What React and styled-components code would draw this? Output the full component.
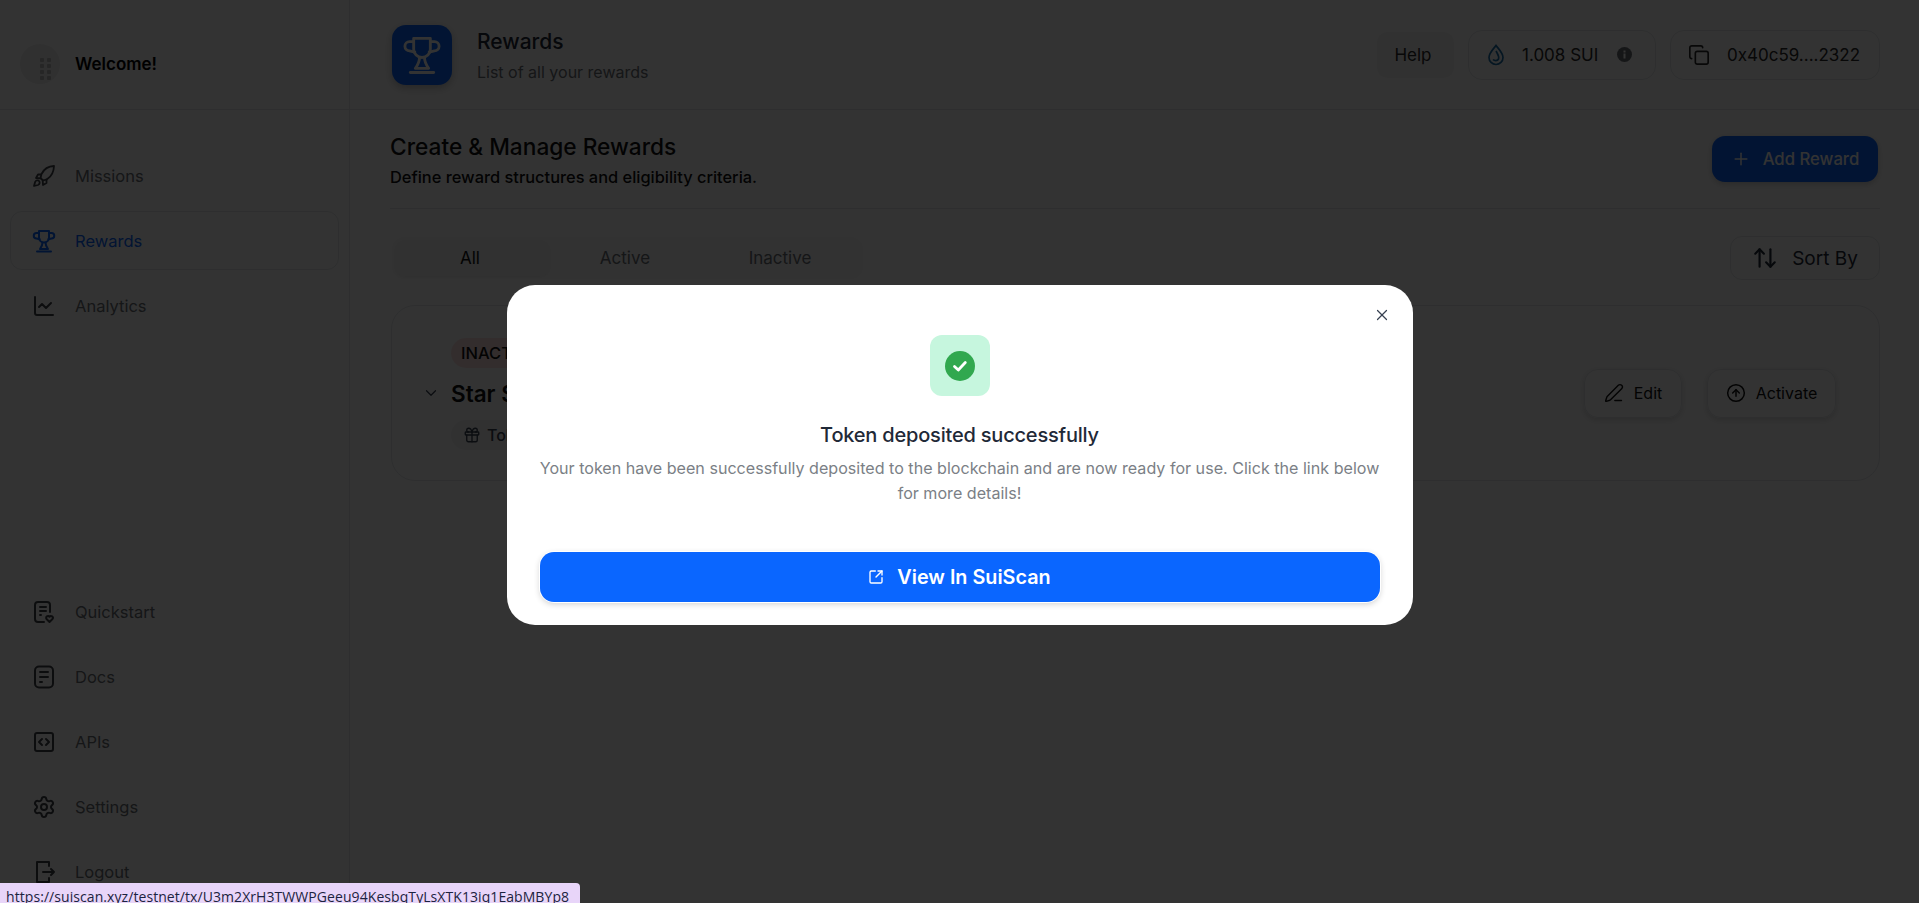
import styled, { createGlobalStyle } from 'styled-components';
import {
  ArrowUpDown,
  ChartLine,
  ChevronDown,
  CircleArrowUp,
  Copy,
  Gift,
  PenLine,
  Plus,
  Settings,
  SquareArrowOutUpRight,
  SquareCode,
  X,
} from 'lucide-react';

const GlobalStyle = createGlobalStyle`
  * { box-sizing: border-box; }
  html, body { margin: 0; padding: 0; height: 100%; background: #fff; }
  body { font-family: Inter, "Open Sans", sans-serif; color: #111827; overflow: hidden; }
`;

const Shell = styled.div`
  display: grid;
  grid-template-columns: 350px 1fr;
  height: 100vh;
  overflow: hidden;
`;

const Sidebar = styled.aside`
  display: flex;
  flex-direction: column;
  border-right: 1px solid #e5e7eb;
  height: 100%;
`;

const Brand = styled.div`
  display: flex;
  align-items: center;
  gap: 15px;
  height: 110px;
  padding: 18px 0 0 20px;
  border-bottom: 1px solid #e5e7eb;
  font-size: 17px;
  font-weight: 600;
  color: #000;
`;

const NavGroup = styled.nav`
  display: flex;
  flex-direction: column;
  padding: 0 10px;
  margin-top: ${(p) => p.$top}px;
`;

const NavItem = styled.a`
  display: flex;
  align-items: center;
  gap: 19px;
  height: ${(p) => (p.$active ? 59 : 65)}px;
  margin: ${(p) => (p.$active ? '3px 0' : '0')};
  padding-left: 21px;
  font-size: 16.5px;
  font-weight: 400;
  color: ${(p) => (p.$active ? '#0a66ff' : '#6b6f76')};
  border: 1px solid ${(p) => (p.$active ? '#e5e7eb' : 'transparent')};
  border-radius: 12px;
  svg { color: ${(p) => (p.$active ? '#0a66ff' : '#3f4248')}; flex-shrink: 0; }
`;

const Main = styled.main`
  display: flex;
  flex-direction: column;
  min-width: 0;
`;

const TopBar = styled.header`
  display: flex;
  align-items: center;
  height: 110px;
  padding: 0 39px 0 42px;
  border-bottom: 1px solid #e5e7eb;
`;

const PageBadge = styled.div`
  display: flex;
  align-items: center;
  justify-content: center;
  width: 60px;
  height: 60px;
  border-radius: 14px;
  background: #0a66ff;
  color: #fff;
  box-shadow: 0 3px 8px rgba(0, 0, 0, 0.25);
`;

const PageTitle = styled.div`
  margin-left: 25px;
  padding-top: 4px;
  flex: 1;
`;

const PageName = styled.div`
  font-size: 21px;
  font-weight: 500;
  line-height: 30px;
  color: #1f2937;
`;

const PageSub = styled.div`
  font-size: 16px;
  line-height: 30px;
  color: #6b6f76;
`;

const TopActions = styled.div`
  display: flex;
  align-items: center;
  gap: 14px;
`;

const HelpButton = styled.div`
  display: flex;
  align-items: center;
  justify-content: center;
  width: 77px;
  height: 46px;
  padding-right: 5px;
  border-radius: 10px;
  background: #f6f6f6;
  font-size: 17px;
  color: #2a2a2a;
`;

const Chip = styled.div`
  display: flex;
  align-items: center;
  height: 50px;
  width: ${(p) => p.$w}px;
  padding-left: ${(p) => p.$pad}px;
  gap: 17px;
  border: 1px solid #e5e7eb;
  border-radius: 14px;
  font-size: 17px;
  color: #2a2a2a;
`;

const InfoDot = styled.svg`
  margin-left: 2px;
`;

const Content = styled.section`
  display: flex;
  flex-direction: column;
  padding: 0 39px 0 40px;
`;

const SectionHead = styled.div`
  display: flex;
  align-items: center;
  justify-content: space-between;
  height: 99px;
  border-bottom: 1px solid #e5e7eb;
`;

const SectionCopy = styled.div`
  padding-top: 5px;
`;

const SectionTitle = styled.h2`
  margin: 0;
  font-size: 22.7px;
  font-weight: 500;
  line-height: 30px;
  color: #111;
`;

const SectionSub = styled.p`
  margin: 0;
  font-size: 16.4px;
  font-weight: 500;
  line-height: 30px;
  color: #111;
`;

const PrimaryButton = styled.div`
  display: flex;
  align-items: center;
  justify-content: center;
  gap: 12px;
  width: 166px;
  height: 46px;
  margin-right: 2px;
  border-radius: 13px;
  background: #0a66ff;
  color: #fff;
  font-size: 16.7px;
  font-weight: 500;
  box-shadow: 0 2px 6px rgba(0, 0, 0, 0.2);
`;

const FilterRow = styled.div`
  display: flex;
  align-items: center;
  justify-content: space-between;
  height: 96px;
  padding-top: 2px;
`;

const Tabs = styled.div`
  display: flex;
  padding: 3px;
  margin-left: 2px;
  border-radius: 12px;
  background: #fafafa;
`;

const Tab = styled.div`
  display: flex;
  align-items: center;
  justify-content: center;
  width: 155px;
  height: 36px;
  padding-right: 5px;
  border-radius: 10px;
  font-size: 17px;
  font-weight: 400;
  color: ${(p) => (p.$active ? '#111' : '#6b6f76')};
  background: ${(p) => (p.$active ? '#f5f5f5' : 'transparent')};
  box-shadow: ${(p) => (p.$active ? '0 1px 3px rgba(0, 0, 0, 0.06)' : 'none')};
`;

const SortButton = styled.div`
  display: flex;
  align-items: center;
  justify-content: center;
  gap: 14px;
  width: 150px;
  height: 44px;
  border: 1px solid #e5e7eb;
  border-radius: 12px;
  font-size: 19px;
  color: #1f2937;
`;

const Card = styled.article`
  display: flex;
  align-items: center;
  justify-content: space-between;
  height: 176px;
  padding: 0 43px 0 30px;
  margin-left: 1px;
  border: 1px solid #e5e7eb;
  border-radius: 24px;
`;

const CardLeft = styled.div`
  display: flex;
  align-items: center;
  gap: 11px;
  color: #374151;
`;

const CardStack = styled.div`
  display: flex;
  flex-direction: column;
  align-items: flex-start;
  gap: 11px;
  padding-top: 2px;
`;

const StatusPill = styled.span`
  display: flex;
  align-items: center;
  height: 30px;
  padding: 0 10px;
  border-radius: 15px;
  background: #fde2e2;
  font-size: 16.5px;
  font-weight: 500;
  color: #111;
`;

const CardTitle = styled.div`
  font-size: 22.5px;
  font-weight: 600;
  line-height: 30px;
  color: #111;
`;

const TypePill = styled.span`
  display: flex;
  align-items: center;
  gap: 6px;
  height: 30px;
  padding: 0 12px;
  border-radius: 15px;
  background: #f3f4f6;
  font-size: 16px;
  font-weight: 500;
  color: #374151;
`;

const CardActions = styled.div`
  display: flex;
  gap: 25px;
`;

const GhostButton = styled.div`
  display: flex;
  align-items: center;
  justify-content: center;
  gap: 10px;
  width: ${(p) => p.$w}px;
  height: 49px;
  border: 1px solid #e5e7eb;
  border-radius: 14px;
  font-size: 16px;
  font-weight: 400;
  color: #111;
  box-shadow: 0 2px 6px rgba(0, 0, 0, 0.16);
`;

const Overlay = styled.div`
  position: fixed;
  inset: 0;
  display: flex;
  align-items: center;
  justify-content: center;
  padding-top: 7px;
  background: rgba(0, 0, 0, 0.8);
`;

const Modal = styled.div`
  position: relative;
  display: flex;
  flex-direction: column;
  align-items: center;
  width: 906px;
  height: 340px;
  padding: 50px 33px 0;
  border-radius: 28px;
  background: #fff;
`;

const CloseButton = styled.button`
  position: absolute;
  top: 21px;
  right: 22px;
  display: flex;
  padding: 0;
  border: 0;
  background: none;
  color: #374151;
`;

const SuccessIcon = styled.div`
  display: flex;
  align-items: center;
  justify-content: center;
  width: 60px;
  height: 61px;
  border-radius: 12px;
  background: #c6f6de;
`;

const ModalTitle = styled.h3`
  margin: 22px 0 0;
  font-size: 20px;
  font-weight: 500;
  letter-spacing: -0.2px;
  line-height: 34px;
  color: #1f2937;
`;

const ModalText = styled.p`
  margin: 4px 0 0;
  font-size: 16.1px;
  line-height: 25px;
  text-align: center;
  color: #7b7f86;
`;

const ModalButton = styled.a`
  display: flex;
  align-items: center;
  justify-content: center;
  gap: 13px;
  width: 840px;
  height: 50px;
  margin-top: 46px;
  border-radius: 14px;
  background: #0a66ff;
  color: #fff;
  font-size: 19.8px;
  font-weight: 600;
  box-shadow: 0 0 0 1px #fff, 0 2px 6px rgba(0, 0, 0, 0.2);
`;

const StatusLink = styled.div`
  position: fixed;
  left: 0;
  bottom: 0;
  width: 580px;
  height: 20px;
  padding-left: 6px;
  border-top-right-radius: 4px;
  background: #e8d5f9;
  font-family: "Open Sans", sans-serif;
  font-size: 14px;
  letter-spacing: 0.07px;
  line-height: 28px;
  white-space: nowrap;
  overflow: hidden;
  color: #1c2340;
`;

const AvatarMark = () => (
  <svg width="40" height="40" viewBox="0 0 40 40" fill="none">
    <circle cx="20" cy="20" r="20" fill="#efefef" />
    {[14, 20, 26, 32].map((y) =>
      [20, 27].map((x) => <rect key={`${x}-${y}`} x={x} y={y} width="4" height="4" rx="1" fill="#bcbcbc" />),
    )}
  </svg>
);

const RocketIcon = () => (
  <svg width="24" height="24" viewBox="0 0 24 24" fill="none" stroke="currentColor" strokeWidth="1.8" strokeLinecap="round" strokeLinejoin="round">
    <path d="M22 2c-6 .3-10 3-12.500 8L8.500 14l2.500 2.500 4-1.200c4.500-2.800 6.800-7 7-13.300z" />
    <path d="M9 10.500H6l-2 3.500 4.700.3" />
    <path d="M14.500 15.500V19l-3.500 2-.3-4.500" />
    <path d="M6.500 16.500a2.500 2.500 0 0 0-3.300 1.300L2 22l4-1a2.500 2.500 0 0 0 .5-4.500z" />
  </svg>
);

const TrophyIcon = ({ size = 24, width = 2 }) => (
  <svg width={size} height={size} viewBox="0 0 24 24" fill="none" stroke="currentColor" strokeWidth={width} strokeLinecap="round" strokeLinejoin="round">
    <path d="M7 2h10v6.500a5 5 0 0 1-10 0z" />
    <path d="M7 4H4.500a2.500 2.500 0 0 0 0 5.500l3.200.8" />
    <path d="M17 4h2.500a2.500 2.500 0 0 1 0 5.500l-3.200.8" />
    <path d="M10.500 13.500c0 2.500-1 4.500-2.500 6.500h8c-1.500-2-2.500-4-2.500-6.500" />
    <path d="M5 22.500h14" />
  </svg>
);

const QuickstartIcon = () => (
  <svg width="24" height="24" viewBox="0 0 24 24" fill="none" stroke="currentColor" strokeWidth="2" strokeLinecap="round" strokeLinejoin="round">
    <path d="M18 12V5a3 3 0 0 0-3-3H6a3 3 0 0 0-3 3v14a3 3 0 0 0 3 3h6" />
    <path d="M8 7h6M8 11h6M8 15h1" />
    <path d="M17.500 22l-3-3a1.800 1.800 0 0 1 3-2.200 1.800 1.800 0 0 1 3 2.200z" />
  </svg>
);

const DocsIcon = () => (
  <svg width="24" height="24" viewBox="0 0 24 24" fill="none" stroke="currentColor" strokeWidth="2" strokeLinecap="round" strokeLinejoin="round">
    <rect x="3" y="1.500" width="18" height="21" rx="4" />
    <path d="M8 7h8M8 12h8M8 17h2" />
  </svg>
);

const LogoutIcon = () => (
  <svg width="24" height="24" viewBox="0 0 24 24" fill="none" stroke="currentColor" strokeWidth="2" strokeLinecap="round" strokeLinejoin="round">
    <path d="M17 6V2H5v20h12v-4" />
    <path d="M11 12h11M19 9l3 3-3 3" />
  </svg>
);

const SuiDrop = () => (
  <svg width="18" height="22" viewBox="0 0 18 22" fill="none" stroke="#1a6ea8" strokeWidth="1.7">
    <path d="M9 1.500c3 4 7 7.500 7 12a7 7 0 0 1-14 0c0-4.500 4-8 7-12z" />
    <path d="M9 7c1.500 3 3.500 5 2.500 8-1 2-4 2-5.500.5" />
  </svg>
);

const CheckBadge = () => (
  <svg width="30" height="30" viewBox="0 0 30 30" fill="none">
    <circle cx="15" cy="15" r="15" fill="#31a84f" />
    <path d="M9.500 15.500l3.800 3.500 7-7.500" stroke="#fff" strokeWidth="2.800" strokeLinecap="round" strokeLinejoin="round" />
  </svg>
);

const topItems = [
  { label: 'Missions', icon: <RocketIcon /> },
  { label: 'Rewards', icon: <TrophyIcon />, active: true },
  { label: 'Analytics', icon: <ChartLine size={24} strokeWidth={2} /> },
];

const bottomItems = [
  { label: 'Quickstart', icon: <QuickstartIcon /> },
  { label: 'Docs', icon: <DocsIcon /> },
  { label: 'APIs', icon: <SquareCode size={24} /> },
  { label: 'Settings', icon: <Settings size={24} /> },
  { label: 'Logout', icon: <LogoutIcon /> },
];

const App = () => {
  return (
    <>
      <GlobalStyle />
      <Shell>
        <Sidebar>
          <Brand>
            <AvatarMark />
            Welcome!
          </Brand>
          <NavGroup $top={33}>
            {topItems.map((item) => (
              <NavItem key={item.label} $active={item.active}>
                {item.icon}
                {item.label}
              </NavItem>
            ))}
          </NavGroup>
          <NavGroup $top={241}>
            {bottomItems.map((item) => (
              <NavItem key={item.label}>
                {item.icon}
                {item.label}
              </NavItem>
            ))}
          </NavGroup>
        </Sidebar>

        <Main>
          <TopBar>
            <PageBadge>
              <TrophyIcon size={40} width={1.7} />
            </PageBadge>
            <PageTitle>
              <PageName>Rewards</PageName>
              <PageSub>List of all your rewards</PageSub>
            </PageTitle>
            <TopActions>
              <HelpButton>Help</HelpButton>
              <Chip $w={188} $pad={18}>
                <SuiDrop />
                1.008 SUI
                <InfoDot width="15" height="15" viewBox="0 0 15 15">
                  <circle cx="7.5" cy="7.5" r="7.5" fill="#6b6f76" />
                  <rect x="6.500" y="6.500" width="2" height="5" fill="#fff" />
                  <rect x="6.500" y="3.500" width="2" height="2" fill="#fff" />
                </InfoDot>
              </Chip>
              <Chip $w={210} $pad={17}>
                <Copy size={22} strokeWidth={1.8} />
                0x40c59....2322
              </Chip>
            </TopActions>
          </TopBar>

          <Content>
            <SectionHead>
              <SectionCopy>
                <SectionTitle>Create &amp; Manage Rewards</SectionTitle>
                <SectionSub>Define reward structures and eligibility criteria.</SectionSub>
              </SectionCopy>
              <PrimaryButton>
                <Plus size={20} strokeWidth={1.8} />
                Add Reward
              </PrimaryButton>
            </SectionHead>

            <FilterRow>
              <Tabs>
                <Tab $active>All</Tab>
                <Tab>Active</Tab>
                <Tab>Inactive</Tab>
              </Tabs>
              <SortButton>
                <ArrowUpDown size={26} strokeWidth={2} />
                Sort By
              </SortButton>
            </FilterRow>

            <Card>
              <CardLeft>
                <ChevronDown size={18} strokeWidth={1.6} />
                <CardStack>
                  <StatusPill>INACTIVE</StatusPill>
                  <CardTitle>Star Sui</CardTitle>
                  <TypePill>
                    <Gift size={18} strokeWidth={1.8} />
                    Token
                  </TypePill>
                </CardStack>
              </CardLeft>
              <CardActions>
                <GhostButton $w={98}>
                  <PenLine size={20} strokeWidth={1.7} />
                  Edit
                </GhostButton>
                <GhostButton $w={129}>
                  <CircleArrowUp size={20} strokeWidth={1.8} />
                  Activate
                </GhostButton>
              </CardActions>
            </Card>
          </Content>
        </Main>
      </Shell>

      <Overlay>
        <Modal>
          <CloseButton>
            <X size={18} strokeWidth={1.6} />
          </CloseButton>
          <SuccessIcon>
            <CheckBadge />
          </SuccessIcon>
          <ModalTitle>Token deposited successfully</ModalTitle>
          <ModalText>
            Your token have been successfully deposited to the blockchain and are now ready for use. Click the link below
            <br />
            for more details!
          </ModalText>
          <ModalButton>
            <SquareArrowOutUpRight size={16} strokeWidth={2} />
            View In SuiScan
          </ModalButton>
        </Modal>
      </Overlay>

      <StatusLink>https://suiscan.xyz/testnet/tx/U3m2XrH3TWWPGeeu94KesbqTyLsXTK13iq1EabMBYp8</StatusLink>
    </>
  );
};

export default App;
